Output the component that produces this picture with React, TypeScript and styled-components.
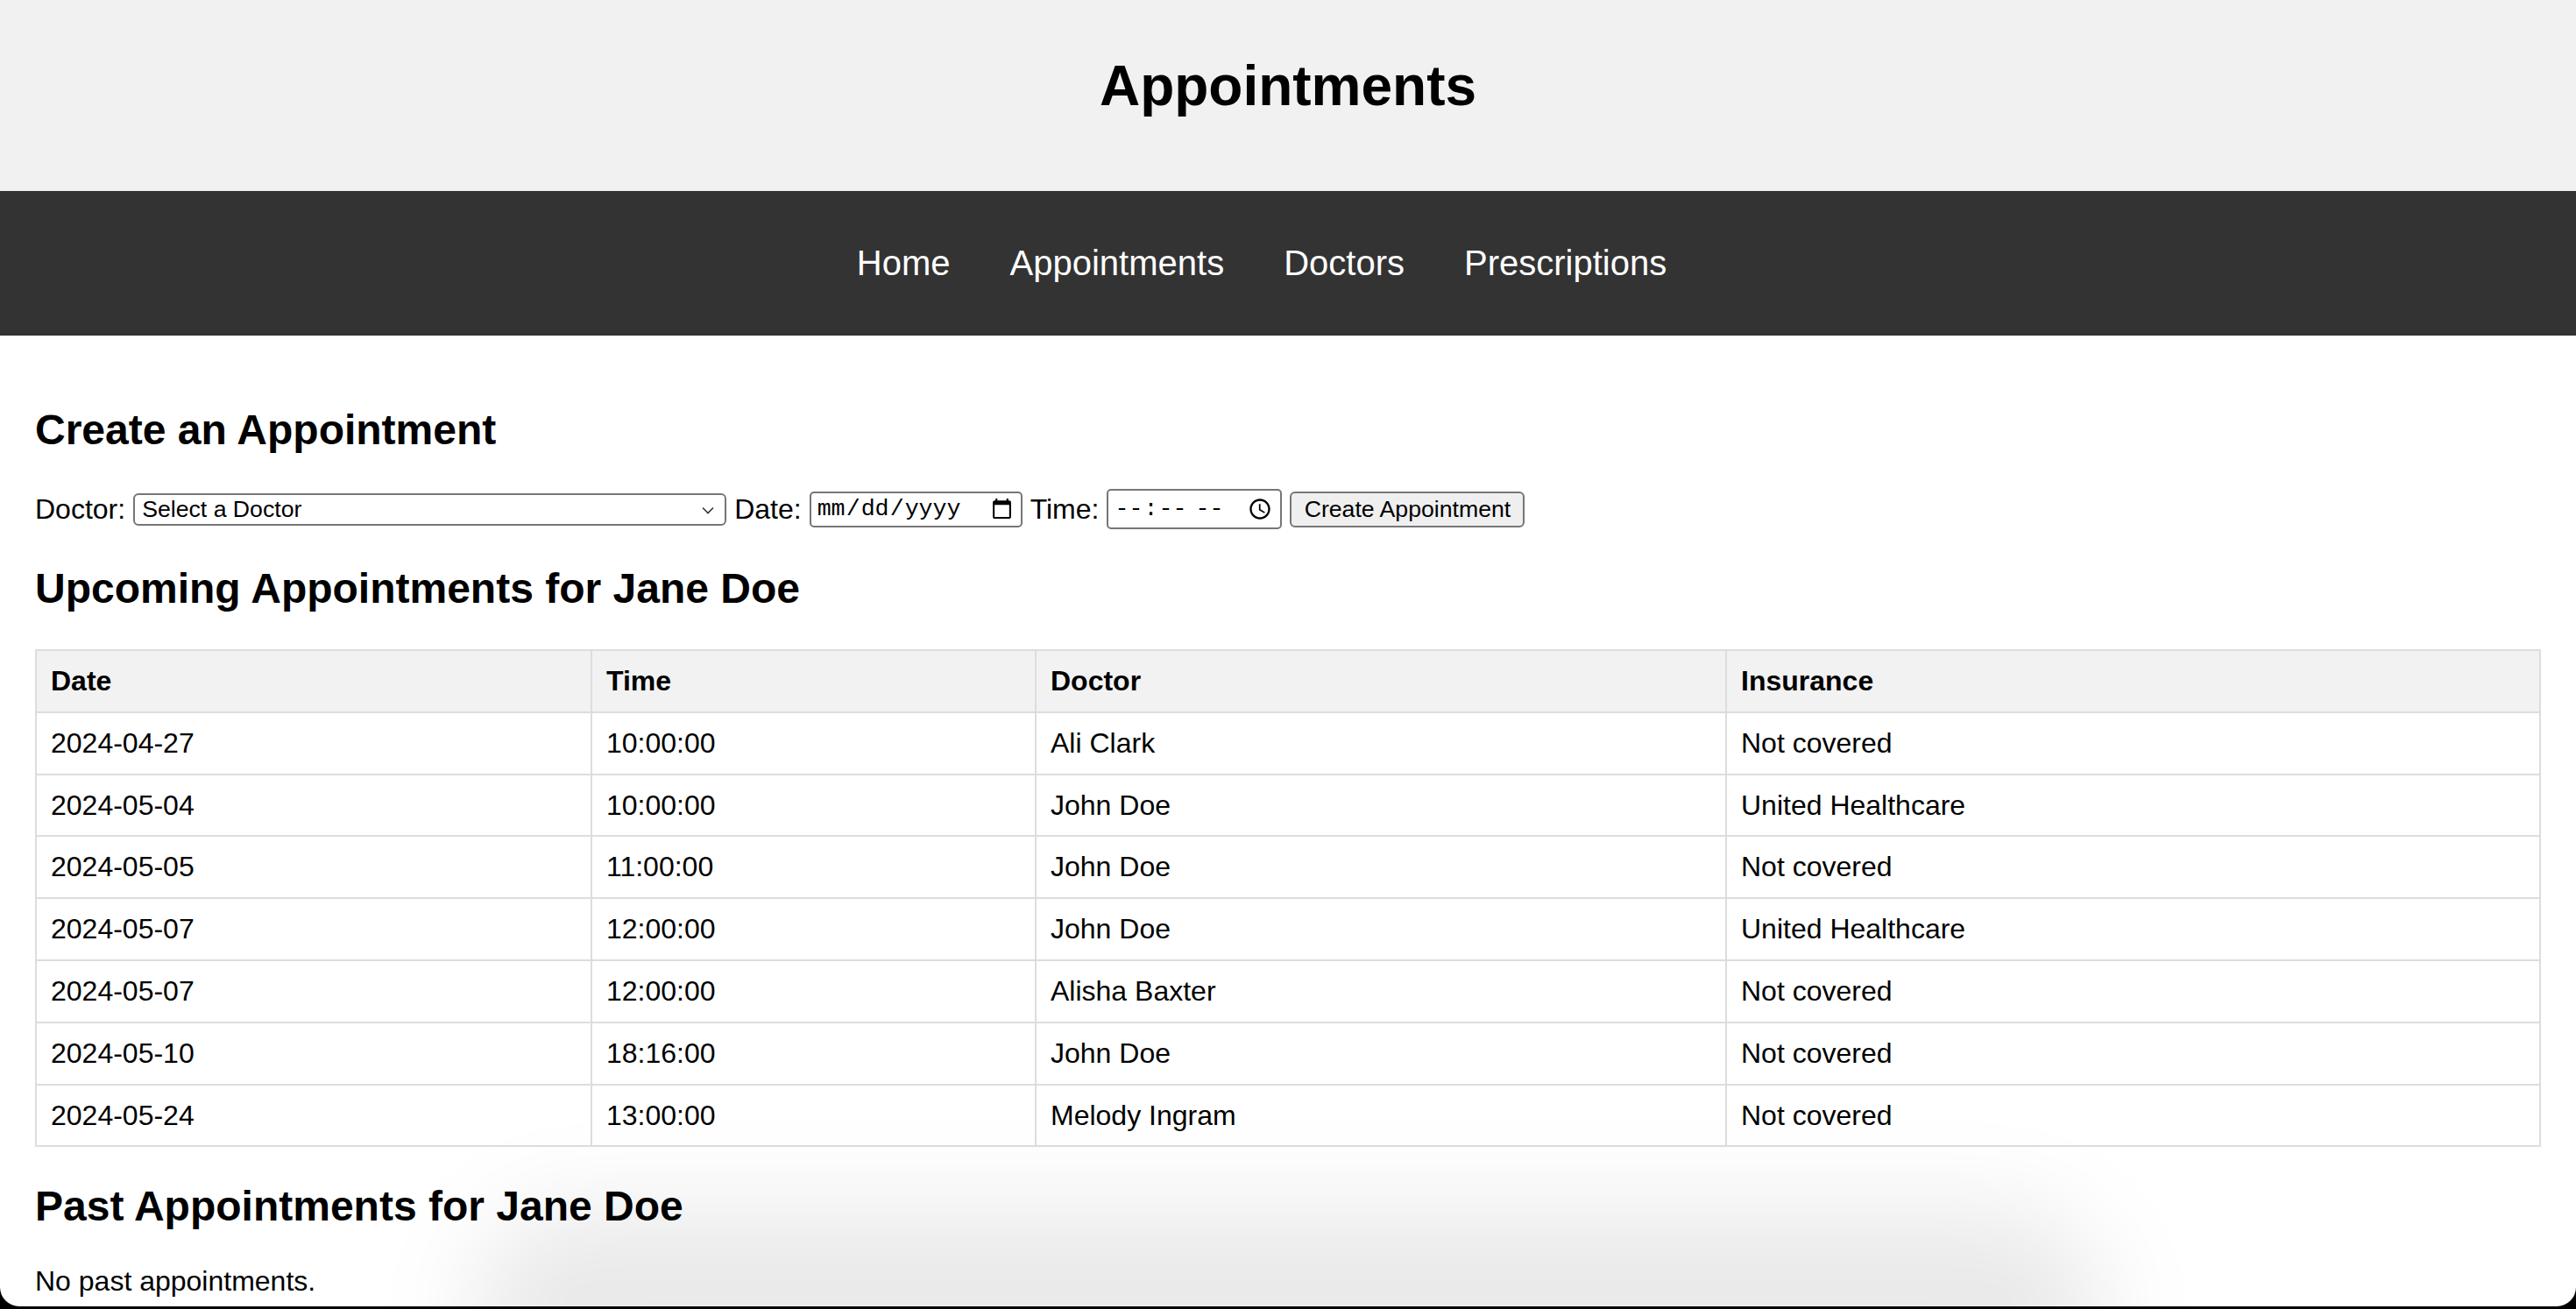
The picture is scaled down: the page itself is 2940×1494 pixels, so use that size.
import React from 'react'
import styled, { createGlobalStyle } from 'styled-components'

const GlobalStyle = createGlobalStyle`
  html, body {
    margin: 0;
    padding: 0;
    background: #000;
  }
  body {
    font-family: 'Liberation Sans', Arial, Helvetica, sans-serif;
    color: #000;
  }
`

const Page = styled.div`
  position: relative;
  height: 1491px;
  overflow: hidden;
  background: #fff;
  border-bottom-left-radius: 22px;
  border-bottom-right-radius: 22px;
`

const Header = styled.header`
  background: #f1f1f1;
  padding: 62px 0 84px;
  text-align: center;
  h1 {
    margin: 0;
    font-size: 64px;
    line-height: 72px;
    font-weight: 700;
  }
`

const Nav = styled.nav`
  background: #333;
  padding: 60px 60px 60px 0;
  display: flex;
  justify-content: center;
  gap: 68px;
`

const NavLink = styled.a`
  color: #fff;
  text-decoration: none;
  font-size: 40px;
  line-height: 45px;
`

const Main = styled.main`
  padding: 40px 40px 0;
`

const SectionTitle = styled.h2<{ $top?: number }>`
  margin: ${(p) => p.$top ?? 40}px 0 40px;
  font-size: 48px;
  line-height: 55px;
  font-weight: 700;
`

const FormRow = styled.form`
  display: flex;
  align-items: center;
  gap: 9px;
  height: 46px;
  font-size: 32px;
`

const Label = styled.label`
  font-size: 32px;
  line-height: 36px;
`

const SelectWrap = styled.span`
  position: relative;
  display: inline-flex;
  svg {
    position: absolute;
    right: 14px;
    top: 15px;
    pointer-events: none;
  }
`

const Select = styled.select`
  appearance: none;
  width: 677px;
  height: 37px;
  box-sizing: border-box;
  border: 2px solid #767676;
  border-radius: 6px;
  background: #fff;
  padding: 0 8px;
  font-family: 'Liberation Sans', Arial, sans-serif;
  font-size: 26.67px;
  color: #000;
`

const Field = styled.input<{ $w: number; $h: number }>`
  width: ${(p) => p.$w}px;
  height: ${(p) => p.$h}px;
  box-sizing: border-box;
  border: 2px solid #767676;
  border-radius: 5px;
  background: #fff;
  padding: 0 6px;
  font-family: 'Liberation Mono', monospace;
  font-size: 26.67px;
  color: #000;
`

const Button = styled.button`
  width: 268px;
  height: 41px;
  box-sizing: border-box;
  border: 2px solid #767676;
  border-radius: 6px;
  background: #efefef;
  font-family: 'Liberation Sans', Arial, sans-serif;
  font-size: 26.67px;
  color: #000;
  padding: 0;
`

const Table = styled.table`
  width: 100%;
  table-layout: fixed;
  border-collapse: collapse;
  margin: 42px 0 0;
  font-size: 32px;
  line-height: 36.8px;
  th,
  td {
    border: 2px solid #ddd;
    padding: 16px;
    text-align: left;
  }
  th {
    background: #f2f2f2;
    font-weight: 700;
  }
`

const Note = styled.p`
  margin: 0;
  font-size: 32px;
  line-height: 36px;
`

const DockShadow = styled.div`
  position: absolute;
  left: 540px;
  width: 1860px;
  bottom: -120px;
  height: 230px;
  border-radius: 120px;
  background: rgba(0, 0, 0, 0.085);
  filter: blur(55px);
  pointer-events: none;
`

const appointments = [
  ['2024-04-27', '10:00:00', 'Ali Clark', 'Not covered'],
  ['2024-05-04', '10:00:00', 'John Doe', 'United Healthcare'],
  ['2024-05-05', '11:00:00', 'John Doe', 'Not covered'],
  ['2024-05-07', '12:00:00', 'John Doe', 'United Healthcare'],
  ['2024-05-07', '12:00:00', 'Alisha Baxter', 'Not covered'],
  ['2024-05-10', '18:16:00', 'John Doe', 'Not covered'],
  ['2024-05-24', '13:00:00', 'Melody Ingram', 'Not covered'],
]

export default function App() {
  return (
    <Page>
      <GlobalStyle />
      <Header>
        <h1>Appointments</h1>
      </Header>
      <Nav>
        <NavLink href="#">Home</NavLink>
        <NavLink href="#">Appointments</NavLink>
        <NavLink href="#">Doctors</NavLink>
        <NavLink href="#">Prescriptions</NavLink>
      </Nav>
      <Main>
        <SectionTitle>Create an Appointment</SectionTitle>
        <FormRow onSubmit={(e) => e.preventDefault()}>
          <Label htmlFor="doctor">Doctor:</Label>
          <SelectWrap>
            <Select id="doctor" defaultValue="">
              <option value="">Select a Doctor</option>
              <option value="1">Ali Clark</option>
              <option value="2">John Doe</option>
              <option value="3">Alisha Baxter</option>
              <option value="4">Melody Ingram</option>
            </Select>
            <svg width="14" height="9" viewBox="0 0 14 9" fill="none">
              <path d="M1 1.5 L7 7.5 L13 1.5" stroke="#333" strokeWidth="1.6" />
            </svg>
          </SelectWrap>
          <Label htmlFor="date">Date:</Label>
          <Field id="date" type="date" $w={243} $h={41} />
          <Label htmlFor="time">Time:</Label>
          <Field id="time" type="time" $w={200} $h={46} />
          <Button type="submit">Create Appointment</Button>
        </FormRow>

        <SectionTitle>Upcoming Appointments for Jane Doe</SectionTitle>
        <Table>
          <colgroup>
            <col style={{ width: 634 }} />
            <col style={{ width: 507 }} />
            <col style={{ width: 788 }} />
            <col />
          </colgroup>
          <thead>
            <tr>
              <th>Date</th>
              <th>Time</th>
              <th>Doctor</th>
              <th>Insurance</th>
            </tr>
          </thead>
          <tbody>
            {appointments.map((row, i) => (
              <tr key={i}>
                {row.map((cell, j) => (
                  <td key={j}>{cell}</td>
                ))}
              </tr>
            ))}
          </tbody>
        </Table>

        <SectionTitle $top={40}>Past Appointments for Jane Doe</SectionTitle>
        <Note>No past appointments.</Note>
      </Main>
      <DockShadow />
    </Page>
  )
}
